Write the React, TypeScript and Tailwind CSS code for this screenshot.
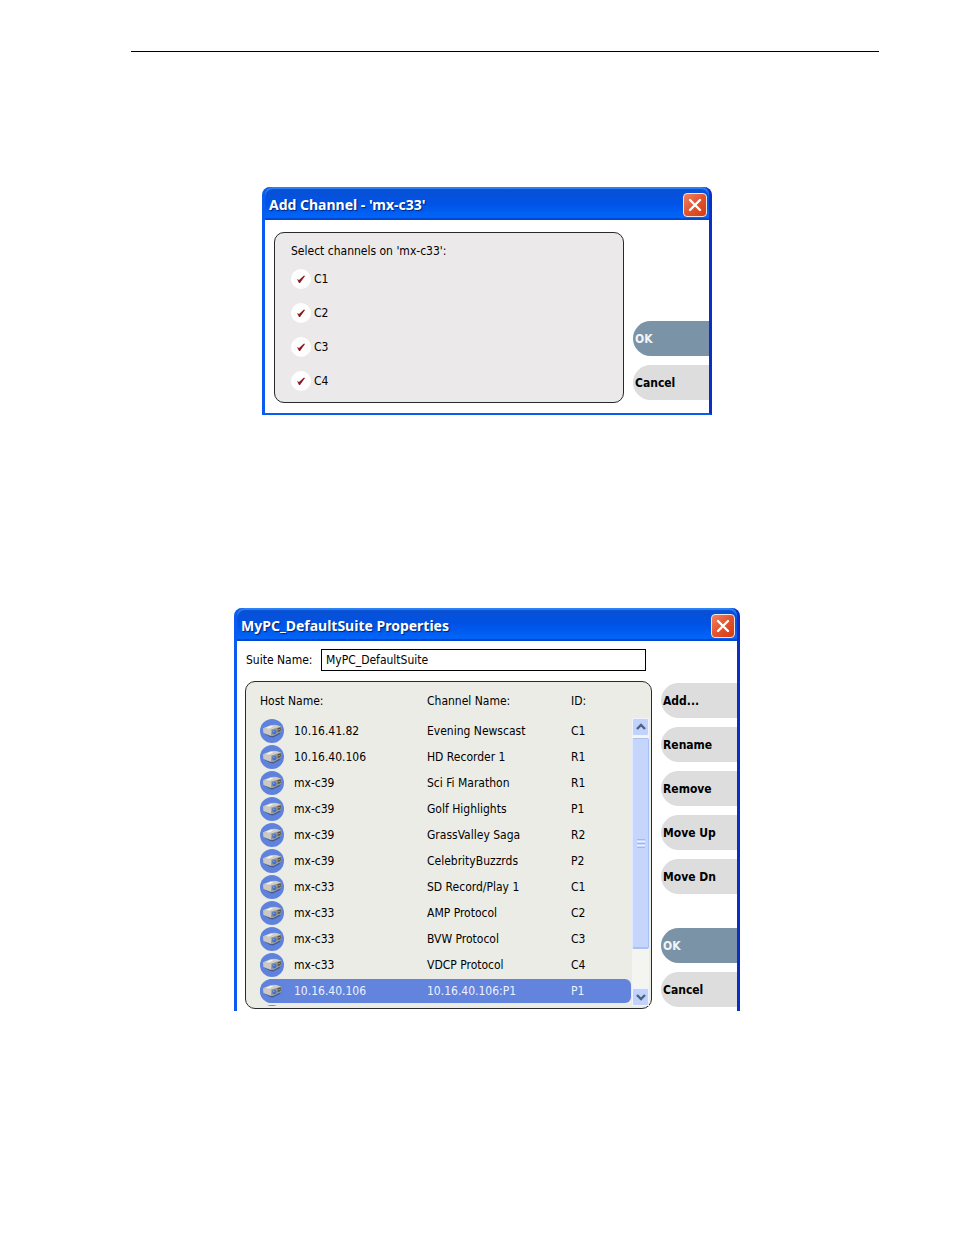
import type { ReactNode } from 'react';
import clsx from 'clsx';

interface Channel {
  host: string;
  name: string;
  id: string;
}

const channels: Channel[] = [
  { host: '10.16.41.82', name: 'Evening Newscast', id: 'C1' },
  { host: '10.16.40.106', name: 'HD Recorder 1', id: 'R1' },
  { host: 'mx-c39', name: 'Sci Fi Marathon', id: 'R1' },
  { host: 'mx-c39', name: 'Golf Highlights', id: 'P1' },
  { host: 'mx-c39', name: 'GrassValley Saga', id: 'R2' },
  { host: 'mx-c39', name: 'CelebrityBuzzrds', id: 'P2' },
  { host: 'mx-c33', name: 'SD Record/Play 1', id: 'C1' },
  { host: 'mx-c33', name: 'AMP Protocol', id: 'C2' },
  { host: 'mx-c33', name: 'BVW Protocol', id: 'C3' },
  { host: 'mx-c33', name: 'VDCP Protocol', id: 'C4' },
  { host: '10.16.40.106', name: '10.16.40.106:P1', id: 'P1' },
];

const selectedRow = 10;

function DeviceIcon() {
  return (
    <svg viewBox="0 0 24 24" className="block size-6" aria-hidden="true">
      <circle cx="12" cy="12" r="12" fill="#5f83dc" />
      <path d="M4 14.500 L12 17 L20.500 13 L20 15 L13 18.500 L10 18Z" fill="#3a4a72" opacity="0.7" />
      <path d="M3 9.300 L11 6 L15.500 5.700 L21.200 7.500 L21 12.800 L13 17 L9.500 16.600 L3.500 14Z" fill="#b4b3ad" />
      <path d="M3.300 9.200 L11 6.200 L15.500 6 L20.800 7.600 L12 10.400Z" fill="#cfcec8" />
      <path d="M5.500 8.900 L10.500 7 L13.500 7 L9.500 9.600Z" fill="#f3f2ee" />
      <path d="M3.200 9.500 L11.500 10.600 L11 16.500 L3.600 13.800Z" fill="#cbc9c2" />
      <path d="M11.500 10.600 L21 7.700 L20.900 12.600 L12.800 16.800 L11 16.500Z" fill="#96958f" />
      <path d="M17.600 9.300 L20.800 8.300 L20.600 12 L17.800 13.200Z" fill="#55534f" />
      <path d="M18.400 10.300 L19.700 9.900 L19.700 10.900 L18.400 11.300Z" fill="#aaa89f" />
      <circle cx="14.300" cy="13" r="2.200" fill="#3f72cf" />
      <circle cx="13.800" cy="12.400" r="0.800" fill="#7aa2ea" />
    </svg>
  );
}

function TitleBar({ title }: { title: string }) {
  return (
    <header className="flex h-[33px] items-center justify-between rounded-t-lg bg-linear-to-b from-[#0a4fd0] via-[#0053e6] to-[#0368fd] pl-1 pr-0.5 pt-0.5 shadow-[inset_0_2px_1px_#2c84f6,inset_0_-2px_1px_#0048cf]">
      <h2 className="font-['Noto_Sans',sans-serif] text-[14px] leading-4 font-bold text-white [text-shadow:1px_1px_1px_#00237c]">
        {title}
      </h2>
      <button
        type="button"
        aria-label="Close"
        className="flex size-6 items-center justify-center rounded border border-[#f6e5e5] bg-linear-to-br from-[#ee8262] via-[#e2532d] to-[#d23c12]"
      >
        <svg viewBox="0 0 14 14" className="size-3.5" aria-hidden="true">
          <path d="M2 2 L12 12 M12 2 L2 12" stroke="#fff" strokeWidth="2.400" strokeLinecap="round" />
        </svg>
      </button>
    </header>
  );
}

function Dialog({ title, className, children }: { title: string; className: string; children: ReactNode }) {
  return (
    <section
      aria-label={title}
      className={clsx(
        'mx-auto max-w-full rounded-t-lg border-l-[3px] border-r-[3px] border-l-[#0a5bf0] border-r-[#0a2fc4] bg-[#0a5bf0] text-[12px] leading-4 text-black',
        className
      )}
    >
      <TitleBar title={title} />
      <div className="flex bg-white">{children}</div>
    </section>
  );
}

function SideButton({ children, primary, className }: { children: ReactNode; primary?: boolean; className?: string }) {
  return (
    <button
      type="button"
      className={clsx(
        'h-[35px] w-full rounded-l-full pl-0.5 text-left text-[12px] leading-4 font-bold',
        primary ? 'bg-[#7b93a6] text-[#f2f5f7]' : 'bg-[#dcdddc] text-black',
        className
      )}
    >
      {children}
    </button>
  );
}

function ScrollBar() {
  return (
    <div className="ml-px mt-9 flex w-[17px] shrink-0 flex-col bg-[#f4f4f0]" aria-hidden="true">
      <div className="flex h-[18px] items-center justify-center rounded-xs border border-[#eef3ff] bg-[#c2d3fb]">
        <svg viewBox="0 0 10 8" className="h-2 w-2.5">
          <path d="M1 6 L5 2 L9 6" fill="none" stroke="#4d6185" strokeWidth="2.400" />
        </svg>
      </div>
      <div className="mt-0.5 flex h-[211px] flex-col items-center justify-center gap-px rounded-xs border border-b-2 border-[#a9c0f5] border-l-[#dfe8ff] bg-[#c5d5fb]">
        <span className="h-px w-2 bg-[#9dbaf8]" />
        <span className="h-px w-2 bg-[#eef3ff]" />
        <span className="h-px w-2 bg-[#9dbaf8]" />
        <span className="h-px w-2 bg-[#eef3ff]" />
        <span className="h-px w-2 bg-[#9dbaf8]" />
      </div>
      <div className="mt-auto flex h-[18px] items-center justify-center rounded-xs border border-[#eef3ff] bg-[#c2d3fb]">
        <svg viewBox="0 0 10 8" className="h-2 w-2.5">
          <path d="M1 2 L5 6 L9 2" fill="none" stroke="#4d6185" strokeWidth="2.400" />
        </svg>
      </div>
    </div>
  );
}

function AddChannelDialog() {
  return (
    <Dialog title="Add Channel - 'mx-c33'" className="w-[450px] border-b-2 border-b-[#0a5bf0]">
      <fieldset className="mb-2.5 ml-[9px] mt-3 flex h-[171px] min-w-0 flex-1 flex-col rounded-[10px] border border-[#2a2a2a] bg-[#ebe9ea] pl-4 pt-2.5">
        <p>Select channels on 'mx-c33':</p>
        <div className="mt-2.5 flex flex-col gap-3.5">
          {['C1', 'C2', 'C3', 'C4'].map((name) => (
            <label key={name} className="flex h-5 items-center gap-[3px]">
              <span className="grid place-items-center">
                <input
                  type="checkbox"
                  defaultChecked
                  className="peer col-start-1 row-start-1 size-5 appearance-none rounded-full bg-white"
                />
                <svg
                  viewBox="0 0 10 10"
                  className="pointer-events-none col-start-1 row-start-1 hidden size-2.5 peer-checked:block"
                  aria-hidden="true"
                >
                  <path d="M1 5 L3 6 L8 1.500 L9 2 L4 9 L3 9Z" fill="#8e1a22" />
                </svg>
              </span>
              {name}
            </label>
          ))}
        </div>
      </fieldset>
      <div className="ml-[9px] flex w-[76px] shrink-0 flex-col justify-end gap-[9px] pb-[13px]">
        <SideButton primary>OK</SideButton>
        <SideButton>Cancel</SideButton>
      </div>
    </Dialog>
  );
}

function SuitePropertiesDialog() {
  return (
    <Dialog title="MyPC_DefaultSuite Properties" className="w-[506px]">
      <div className="mb-0.5 ml-2 mt-2 min-w-0 flex-1">
        <div className="flex items-center pl-px pr-1.5">
          <label htmlFor="suite-name" className="w-[75px] shrink-0">
            Suite Name:
          </label>
          <input
            id="suite-name"
            type="text"
            defaultValue="MyPC_DefaultSuite"
            className="h-[22px] min-w-0 flex-1 border border-black bg-white px-1"
          />
        </div>
        <div className="mt-2.5 flex rounded-[10px] border border-[#2a2a2a] bg-[#ecece6] pb-0.5 pl-3.5 pr-0.5">
          <div className="h-[324px] min-w-0 flex-1 overflow-hidden">
            <table className="w-full table-fixed border-separate border-spacing-x-0 border-spacing-y-0.5 text-left">
              <colgroup>
                <col className="w-[34px]" />
                <col className="w-[133px]" />
                <col className="w-36" />
                <col />
              </colgroup>
              <thead>
                <tr className="h-[33px]">
                  <th colSpan={2} className="p-0 font-normal">Host Name:</th>
                  <th className="p-0 font-normal">Channel Name:</th>
                  <th className="p-0 font-normal">ID:</th>
                </tr>
              </thead>
              <tbody>
                {channels.map((channel, i) => {
                  const bg = i === selectedRow && 'bg-[#6284dc]';
                  return (
                    <tr key={i} className={clsx('h-6', i === selectedRow && 'text-[#eef2ff]')}>
                      <td className={clsx('rounded-l-full p-0', bg)}>
                        <DeviceIcon />
                      </td>
                      <td className={clsx('p-0', bg)}>{channel.host}</td>
                      <td className={clsx('p-0', bg)}>{channel.name}</td>
                      <td className={clsx('rounded-r-md p-0', bg)}>{channel.id}</td>
                    </tr>
                  );
                })}
                <tr className="h-6">
                  <td colSpan={4} className="p-0">
                    <DeviceIcon />
                  </td>
                </tr>
              </tbody>
            </table>
          </div>
          <ScrollBar />
        </div>
      </div>
      <div className="ml-[9px] flex w-[76px] shrink-0 flex-col gap-[9px] pb-1 pt-[42px]">
        <SideButton>Add...</SideButton>
        <SideButton>Rename</SideButton>
        <SideButton>Remove</SideButton>
        <SideButton>Move Up</SideButton>
        <SideButton>Move Dn</SideButton>
        <SideButton primary className="mt-auto">
          OK
        </SideButton>
        <SideButton>Cancel</SideButton>
      </div>
    </Dialog>
  );
}

export default function App() {
  return (
    <main className="min-h-screen bg-white pt-[51px] font-['DejaVu_Sans_Condensed','DejaVu_Sans',sans-serif]">
      <hr className="ml-[131px] mr-[75px] border-t border-black" />
      <div className="flex flex-col gap-[193px] pb-56 pl-5 pt-[135px]">
        <AddChannelDialog />
        <SuitePropertiesDialog />
      </div>
    </main>
  );
}
